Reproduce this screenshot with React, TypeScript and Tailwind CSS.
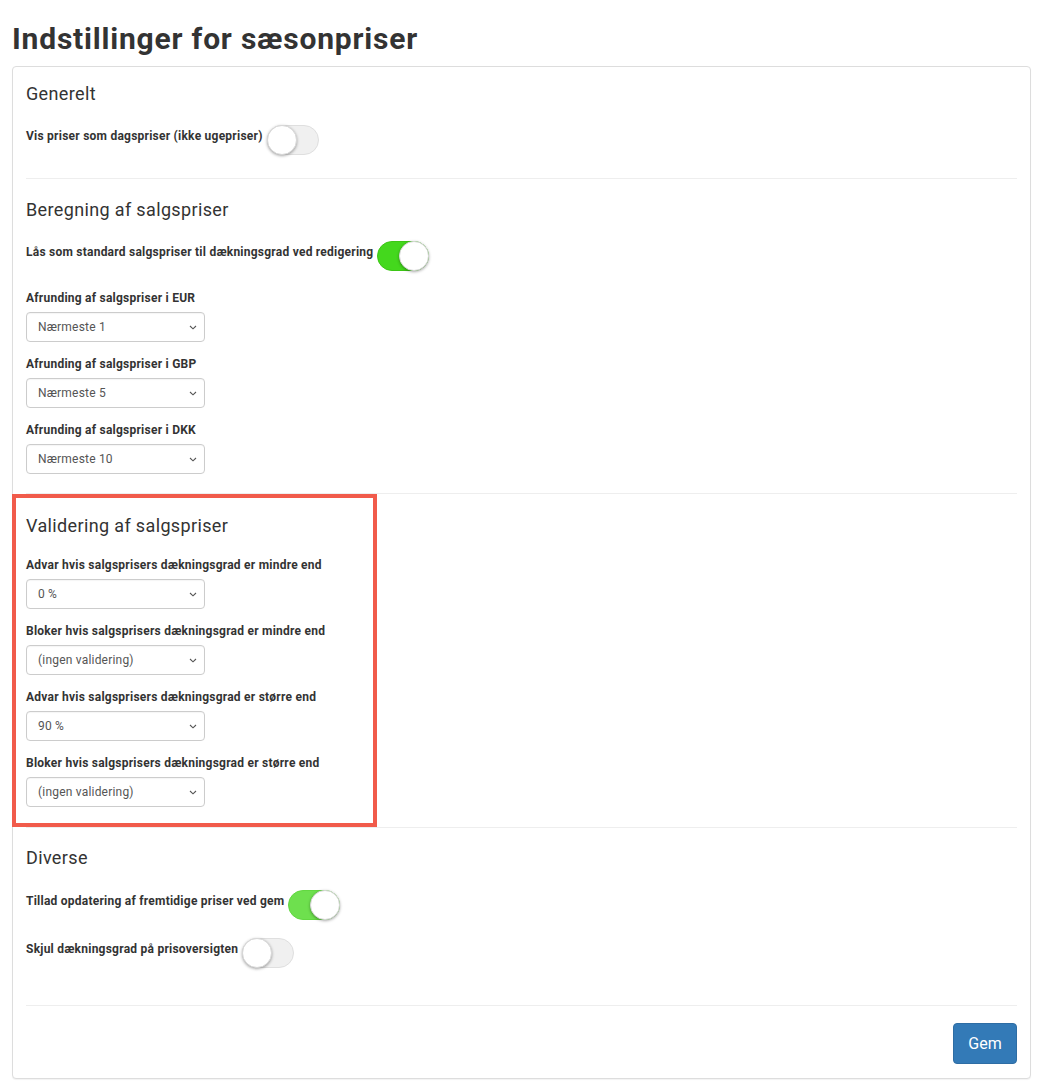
import React from 'react';

const font = { fontFamily: 'Roboto, "Liberation Sans", Arial, sans-serif' };

const Toggle = ({ on, color }: { on: boolean; color?: string }) => (
  <div
    className={`flex h-[30px] w-[52px] shrink-0 items-center rounded-full border ${
      on ? 'justify-end' : 'justify-start border-[#dfdfdf] bg-[#f0f0f0]'
    } ${color ?? ''}`}
  >
    <div className="-m-px h-[30px] w-[30px] rounded-full border border-[#d8d8d8] bg-white shadow-[0_1px_3px_rgba(0,0,0,0.35)]" />
  </div>
);

const ToggleRow = ({ label, on, color, className }: { label: string; on: boolean; color?: string; className?: string }) => (
  <div className={`flex items-start gap-[4px] ${className ?? ''}`}>
    <span className="mt-[2.5px] text-[12px] font-bold leading-[17px] tracking-[0.24px] text-[#333]">{label}</span>
    <Toggle on={on} color={color} />
  </div>
);

const SelectField = ({ label, value, className }: { label: string; value: string; className?: string }) => (
  <div className={className}>
    <div className="text-[12px] font-bold leading-[17px] tracking-[0.24px] text-[#333]">{label}</div>
    <div className="mt-[5px] flex h-[30px] w-[179px] items-center justify-between rounded-[4px] border border-[#ccc] bg-white pl-[11px] pr-[7px] shadow-[inset_0_1px_1px_rgba(0,0,0,0.04)]">
      <span className="text-[12px] tracking-[0.2px] text-[#555]">{value}</span>
      <svg width="8" height="5" viewBox="0 0 8 5" fill="none">
        <path d="M1 1 L4 3.8 L7 1" stroke="#555" strokeWidth="1.1" />
      </svg>
    </div>
  </div>
);

const Heading = ({ children, className }: { children: React.ReactNode; className?: string }) => (
  <h3 className={`text-[18px] font-normal leading-[20px] tracking-[0.36px] text-[#333] ${className ?? ''}`}>{children}</h3>
);

const Divider = ({ className }: { className?: string }) => <div className={`h-px bg-[#eee] ${className ?? ''}`} />;

export default function App() {
  return (
    <div className="min-h-screen bg-white pt-[22px]" style={font}>
      <h1 className="ml-[12px] text-[30px] font-bold leading-[33px] tracking-[0.8px] text-[#333]">Indstillinger for sæsonpriser</h1>

      <div className="mb-[8px] ml-[12px] mr-[13px] mt-[11px] rounded-[4px] border border-[#ddd] bg-white px-[13px] pb-[14px] pt-[17px] shadow-[0_1px_1px_rgba(0,0,0,0.05)]">
        {/* Generelt */}
        <Heading>Generelt</Heading>
        <ToggleRow className="mt-[21px]" label="Vis priser som dagspriser (ikke ugepriser)" on={false} />

        <Divider className="mt-[23px]" />

        {/* Beregning */}
        <Heading className="mt-[21px]">Beregning af salgspriser</Heading>
        <ToggleRow
          className="mt-[21px]"
          label="Lås som standard salgspriser til dækningsgrad ved redigering"
          on
          color="border-[#3cc615] bg-[#44d81d]"
        />
        <SelectField className="mt-[19px]" label="Afrunding af salgspriser i EUR" value="Nærmeste 1" />
        <SelectField className="mt-[14px]" label="Afrunding af salgspriser i GBP" value="Nærmeste 5" />
        <SelectField className="mt-[14px]" label="Afrunding af salgspriser i DKK" value="Nærmeste 10" />

        <Divider className="mt-[19px]" />

        {/* Validering, marked with the red annotation box */}
        <div className="relative pb-[20px] pt-[22px]">
          <div className="pointer-events-none absolute bottom-0 left-[-14px] top-0 w-[365px] border-[4px] border-[#f15b4b]" />
          <Heading>Validering af salgspriser</Heading>
          <SelectField className="mt-[21px]" label="Advar hvis salgsprisers dækningsgrad er mindre end" value="0 %" />
          <SelectField className="mt-[14px]" label="Bloker hvis salgsprisers dækningsgrad er mindre end" value="(ingen validering)" />
          <SelectField className="mt-[14px]" label="Advar hvis salgsprisers dækningsgrad er større end" value="90 %" />
          <SelectField className="mt-[14px]" label="Bloker hvis salgsprisers dækningsgrad er større end" value="(ingen validering)" />
        </div>

        <Divider />

        {/* Diverse */}
        <Heading className="mt-[20px]">Diverse</Heading>
        <ToggleRow
          className="mt-[22px]"
          label="Tillad opdatering af fremtidige priser ved gem"
          on
          color="border-[#62d841] bg-[#6ee04e]"
        />
        <ToggleRow className="mt-[18px]" label="Skjul dækningsgrad på prisoversigten" on={false} />

        <Divider className="mt-[37px]" />

        <div className="mt-[17px] flex justify-end">
          <button className="h-[41px] w-[64px] rounded-[4px] border border-[#2e6da4] bg-[#337ab7] text-[16px] text-white">
            Gem
          </button>
        </div>
      </div>
    </div>
  );
}
